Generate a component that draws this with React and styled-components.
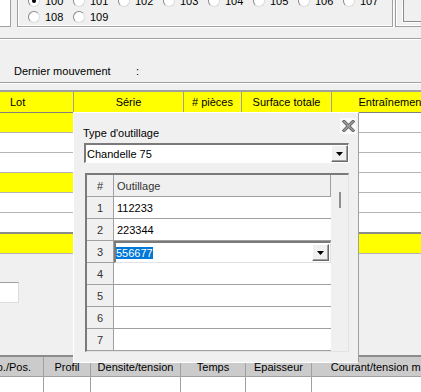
import React from "react";
import styled, { createGlobalStyle } from "styled-components";

const GlobalStyle = createGlobalStyle`
  html, body {
    margin: 0;
    padding: 0;
    background: #f0f0f0;
  }
  body {
    font-family: "Liberation Sans", Arial, sans-serif;
    font-size: 11px;
    color: #000;
  }
  *, *::before, *::after {
    box-sizing: border-box;
  }
`;

const Page = styled.div`
  position: relative;
  width: 421px;
  height: 392px;
  overflow: hidden;
  background: #f0f0f0;
`;

/* ---------- top : radio group ---------- */

const TopArea = styled.div`
  display: flex;
  align-items: flex-start;
  height: 39px;
  border-bottom: 1px solid #a0a0a0;
`;

const StubInput = styled.div`
  width: 11px;
  height: 27px;
  background: #fff;
  border-right: 1px solid #a0a0a0;
  border-bottom: 1px solid #a0a0a0;
`;

const GroupBox = styled.div`
  width: 376px;
  height: 27px;
  margin-left: 6px;
  border: 1px solid #a0a0a0;
  border-top: none;
  box-shadow: inset 1px -1px 0 #fff, 1px 1px 0 #fff;
`;

const RadioGrid = styled.div`
  display: grid;
  grid-template-columns: repeat(8, 45px);
  grid-auto-rows: 16px;
  margin-top: -7px;
  padding-left: 10px;
`;

const RadioItem = styled.label`
  display: flex;
  align-items: center;
  gap: 5px;
  line-height: 16px;
`;

const RadioCircle = styled.span`
  display: flex;
  align-items: center;
  justify-content: center;
  width: 12px;
  height: 12px;
  border-radius: 50%;
  background: #fff;
  border: 1px solid;
  border-color: #8a8a8a #dadada #dadada #8a8a8a;

  &::after {
    content: "";
    display: ${(p) => (p.$checked ? "block" : "none")};
    width: 4px;
    height: 4px;
    border-radius: 50%;
    background: #000;
  }
`;

const SideGroup = styled.div`
  display: flex;
  flex: 1;
  height: 27px;
  margin-left: 2px;
  padding-left: 7px;
  border-left: 1px solid #a0a0a0;
  border-bottom: 1px solid #a0a0a0;
  box-shadow: inset 1px -1px 0 #fff;
`;

const SideButton = styled.div`
  flex: 1;
  height: 22px;
  border-left: 1px solid #8a8a8a;
  border-bottom: 1px solid #8a8a8a;
  box-shadow: -1px 1px 0 #fff;
`;

/* ---------- info line ---------- */

const InfoRow = styled.div`
  display: flex;
  height: 44px;
  padding: 24px 0 0 14px;
  line-height: 14px;
  border-top: 1px solid #fff;
  border-bottom: 1px solid #a0a0a0;
`;

const InfoLabel = styled.span`
  width: 122px;
`;

const Spacer = styled.div`
  height: 7px;
  border-top: 1px solid #fff;
`;

/* ---------- main table ---------- */

const MainTable = styled.div`
  border-top: 2px solid #a0a0a0;
`;

const mainCols = "74px 110px 58px 90px 120px";

const HeadRow = styled.div`
  display: grid;
  grid-template-columns: ${mainCols};
  height: 21px;
  background: #ffff00;
  border-bottom: 1px solid #808080;
`;

const HeadCell = styled.div`
  display: flex;
  align-items: center;
  justify-content: ${(p) => (p.$left ? "flex-start" : "center")};
  padding-left: ${(p) => (p.$left ? "10px" : "0")};
  border-right: 1px solid #a0a0a0;
  white-space: nowrap;
  overflow: hidden;
`;

const BodyRow = styled.div`
  display: grid;
  grid-template-columns: ${mainCols};
  height: ${(p) => (p.$thick ? "21px" : "20px")};
  border-bottom: ${(p) => (p.$thick ? "2px solid #8c8c8c" : "1px solid #b4b4b4")};
  background: ${(p) => (p.$yellow ? "#ffff00" : "#fff")};
`;

const BodyCell = styled.div`
  background: ${(p) => (p.$yellow ? "#ffff00" : "transparent")};
  border-right: ${(p) => (p.$sep ? "1px solid #a0a0a0" : "none")};
`;

const LowerArea = styled.div`
  height: 101px;
  padding-top: 28px;
`;

const SmallInput = styled.div`
  width: 20px;
  height: 21px;
  margin-left: -1px;
  background: #fff;
  border: 1px solid;
  border-color: #a0a0a0 #dcdcdc #dcdcdc #a0a0a0;
`;

/* ---------- bottom table ---------- */

const bottomCols = "44px 47px 90px 65px 66px 140px";

const BottomTable = styled.div`
  border-top: 2px solid #8c8c8c;
`;

const BottomHead = styled.div`
  display: grid;
  grid-template-columns: ${bottomCols};
  height: 20px;
  background: #cbcbcb;
  border-bottom: 1px solid #a0a0a0;
`;

const BottomHeadCell = styled.div`
  display: flex;
  align-items: center;
  justify-content: ${(p) => (p.$end ? "flex-end" : "center")};
  padding-right: ${(p) => (p.$end ? "12px" : "0")};
  border-right: 1px solid #a0a0a0;
  white-space: nowrap;
  overflow: hidden;
`;

const BottomRow = styled.div`
  display: grid;
  grid-template-columns: ${bottomCols};
  height: 20px;
  background: #fff;
`;

const BottomCell = styled.div`
  border-right: 1px solid #a0a0a0;
`;

/* ---------- dialog ---------- */

const Dialog = styled.div`
  position: absolute;
  left: 73px;
  top: 112px;
  width: 286px;
  height: 251px;
  display: flex;
  flex-direction: column;
  padding: 13px 9px 9px 9px;
  background: #f0f0f0;
  border: 1px solid #fff;
  border-right-color: #a0a0a0;
`;

const CloseButton = styled.div`
  position: absolute;
  top: 5px;
  right: 2px;
  width: 16px;
  height: 16px;
  display: flex;
  align-items: center;
  justify-content: center;
  background: #fafafa;
`;

const FieldLabel = styled.div`
  height: 14px;
  line-height: 14px;
  white-space: nowrap;
`;

const Combo = styled.div`
  display: flex;
  align-items: stretch;
  width: 265px;
  height: 20px;
  margin: 3px 0 0 1px;
  background: #fff;
  border-style: solid;
  border-width: 2px 1px 1px 2px;
  border-color: #7a7a7a #fff #fff #7a7a7a;
`;

const ComboText = styled.div`
  flex: 1;
  display: flex;
  align-items: center;
  padding-left: 1px;
  white-space: nowrap;
`;

const DropButton = styled.div`
  display: flex;
  align-items: center;
  justify-content: center;
  align-self: stretch;
  width: 17px;
  margin: ${(p) => (p.$inCell ? "1px 1px 1px 0" : "0")};
  background: #f0f0f0;
  border: 1px solid;
  border-color: #fff #696969 #696969 #fff;
  box-shadow: inset -1px -1px 0 #a0a0a0;
`;

const ToolGrid = styled.div`
  display: flex;
  width: 264px;
  height: 179px;
  margin: 10px 0 0 2px;
  border-style: solid;
  border-width: 2px 1px 1px 2px;
  border-color: #7a7a7a #e3e3e3 #e3e3e3 #7a7a7a;
  background: #fff;
`;

const GridTable = styled.div`
  flex: 1;
  display: flex;
  flex-direction: column;
`;

const GridRow = styled.div`
  display: grid;
  grid-template-columns: 27px 1fr;
  height: 22px;
`;

const GridHeadCell = styled.div`
  display: flex;
  align-items: center;
  justify-content: ${(p) => (p.$center ? "center" : "flex-start")};
  padding-left: ${(p) => (p.$center ? "0" : "3px")};
  background: #f0f0f0;
  color: #333;
  border-right: 1px solid #a0a0a0;
  border-bottom: 1px solid #a0a0a0;
`;

const NumCell = styled.div`
  display: flex;
  align-items: center;
  justify-content: center;
  background: #f0f0f0;
  color: #333;
  border-right: 1px solid #a0a0a0;
  border-bottom: 1px solid #a0a0a0;
`;

const DataCell = styled.div`
  display: flex;
  align-items: center;
  padding-left: ${(p) => (p.$editing ? "0" : "3px")};
  background: #fff;
  border-bottom: 1px solid #a0a0a0;
  ${(p) =>
    p.$editing &&
    `
    border-style: solid;
    border-width: 2px 1px 1px 2px;
    border-color: #7a7a7a #e3e3e3 #e3e3e3 #7a7a7a;
  `}
`;

const Selected = styled.span`
  background: #0078d7;
  color: #fff;
  line-height: 12px;
`;

const CellFill = styled.div`
  flex: 1;
`;

const ScrollBar = styled.div`
  display: flex;
  justify-content: center;
  width: 17px;
  padding-top: 17px;
  background: #f0f0f0;
`;

const ScrollThumb = styled.div`
  width: 2px;
  height: 16px;
  background: #8f8f8f;
`;

const Arrow = () => (
  <svg width="7" height="4" viewBox="0 0 7 4">
    <polygon points="0,0 7,0 3.5,4" fill="#000" />
  </svg>
);

const CloseIcon = () => (
  <svg width="13" height="12" viewBox="0 0 13 12">
    <g strokeLinecap="square">
      <line x1="2" y1="1.5" x2="11" y2="10.5" stroke="#6a6a6a" strokeWidth="3.2" />
      <line x1="11" y1="1.5" x2="2" y2="10.5" stroke="#6a6a6a" strokeWidth="3.2" />
      <line x1="2" y1="1.5" x2="11" y2="10.5" stroke="#a3a3a3" strokeWidth="1.2" />
      <line x1="11" y1="1.5" x2="2" y2="10.5" stroke="#a3a3a3" strokeWidth="1.2" />
    </g>
  </svg>
);

const radios = [
  { label: "100", checked: true },
  { label: "101" },
  { label: "102" },
  { label: "103" },
  { label: "104" },
  { label: "105" },
  { label: "106" },
  { label: "107" },
  { label: "108" },
  { label: "109" },
];

const mainHeaders = ["Lot", "Série", "# pièces", "Surface totale", "Entraînement"];

const mainRows = [
  { lotYellow: true },
  {},
  {},
  { lotYellow: true },
  {},
  { thick: true },
  { yellow: true },
];

const bottomHeaders = ["No./Pos.", "Profil", "Densite/tension", "Temps", "Epaisseur", "Courant/tension max"];

const tools = ["112233", "223344", "556677", "", "", "", ""];

export default function App() {
  return (
    <>
      <GlobalStyle />
      <Page>
        <TopArea>
          <StubInput />
          <GroupBox>
            <RadioGrid>
              {radios.map((r) => (
                <RadioItem key={r.label}>
                  <RadioCircle $checked={r.checked} />
                  {r.label}
                </RadioItem>
              ))}
            </RadioGrid>
          </GroupBox>
          <SideGroup>
            <SideButton />
          </SideGroup>
        </TopArea>

        <InfoRow>
          <InfoLabel>Dernier mouvement</InfoLabel>
          <span>:</span>
        </InfoRow>
        <Spacer />

        <MainTable>
          <HeadRow>
            {mainHeaders.map((h, i) => (
              <HeadCell key={h} $left={i === 0}>
                {h}
              </HeadCell>
            ))}
          </HeadRow>
          {mainRows.map((r, i) => (
            <BodyRow key={i} $thick={r.thick} $yellow={r.yellow}>
              <BodyCell $sep $yellow={r.lotYellow} />
              <BodyCell />
              <BodyCell />
              <BodyCell />
              <BodyCell />
            </BodyRow>
          ))}
        </MainTable>

        <LowerArea>
          <SmallInput />
        </LowerArea>

        <BottomTable>
          <BottomHead>
            {bottomHeaders.map((h, i) => (
              <BottomHeadCell key={h} $end={i === 0}>
                {h}
              </BottomHeadCell>
            ))}
          </BottomHead>
          <BottomRow>
            {bottomHeaders.map((h) => (
              <BottomCell key={h} />
            ))}
          </BottomRow>
        </BottomTable>

        <Dialog>
          <CloseButton>
            <CloseIcon />
          </CloseButton>
          <FieldLabel>Type d'outillage</FieldLabel>
          <Combo>
            <ComboText>Chandelle 75</ComboText>
            <DropButton>
              <Arrow />
            </DropButton>
          </Combo>
          <ToolGrid>
            <GridTable>
              <GridRow>
                <GridHeadCell $center>#</GridHeadCell>
                <GridHeadCell>Outillage</GridHeadCell>
              </GridRow>
              {tools.map((t, i) => (
                <GridRow key={i}>
                  <NumCell>{i + 1}</NumCell>
                  {i === 2 ? (
                    <DataCell $editing>
                      <Selected>{t}</Selected>
                      <CellFill />
                      <DropButton $inCell>
                        <Arrow />
                      </DropButton>
                    </DataCell>
                  ) : (
                    <DataCell>{t}</DataCell>
                  )}
                </GridRow>
              ))}
            </GridTable>
            <ScrollBar>
              <ScrollThumb />
            </ScrollBar>
          </ToolGrid>
        </Dialog>
      </Page>
    </>
  );
}
